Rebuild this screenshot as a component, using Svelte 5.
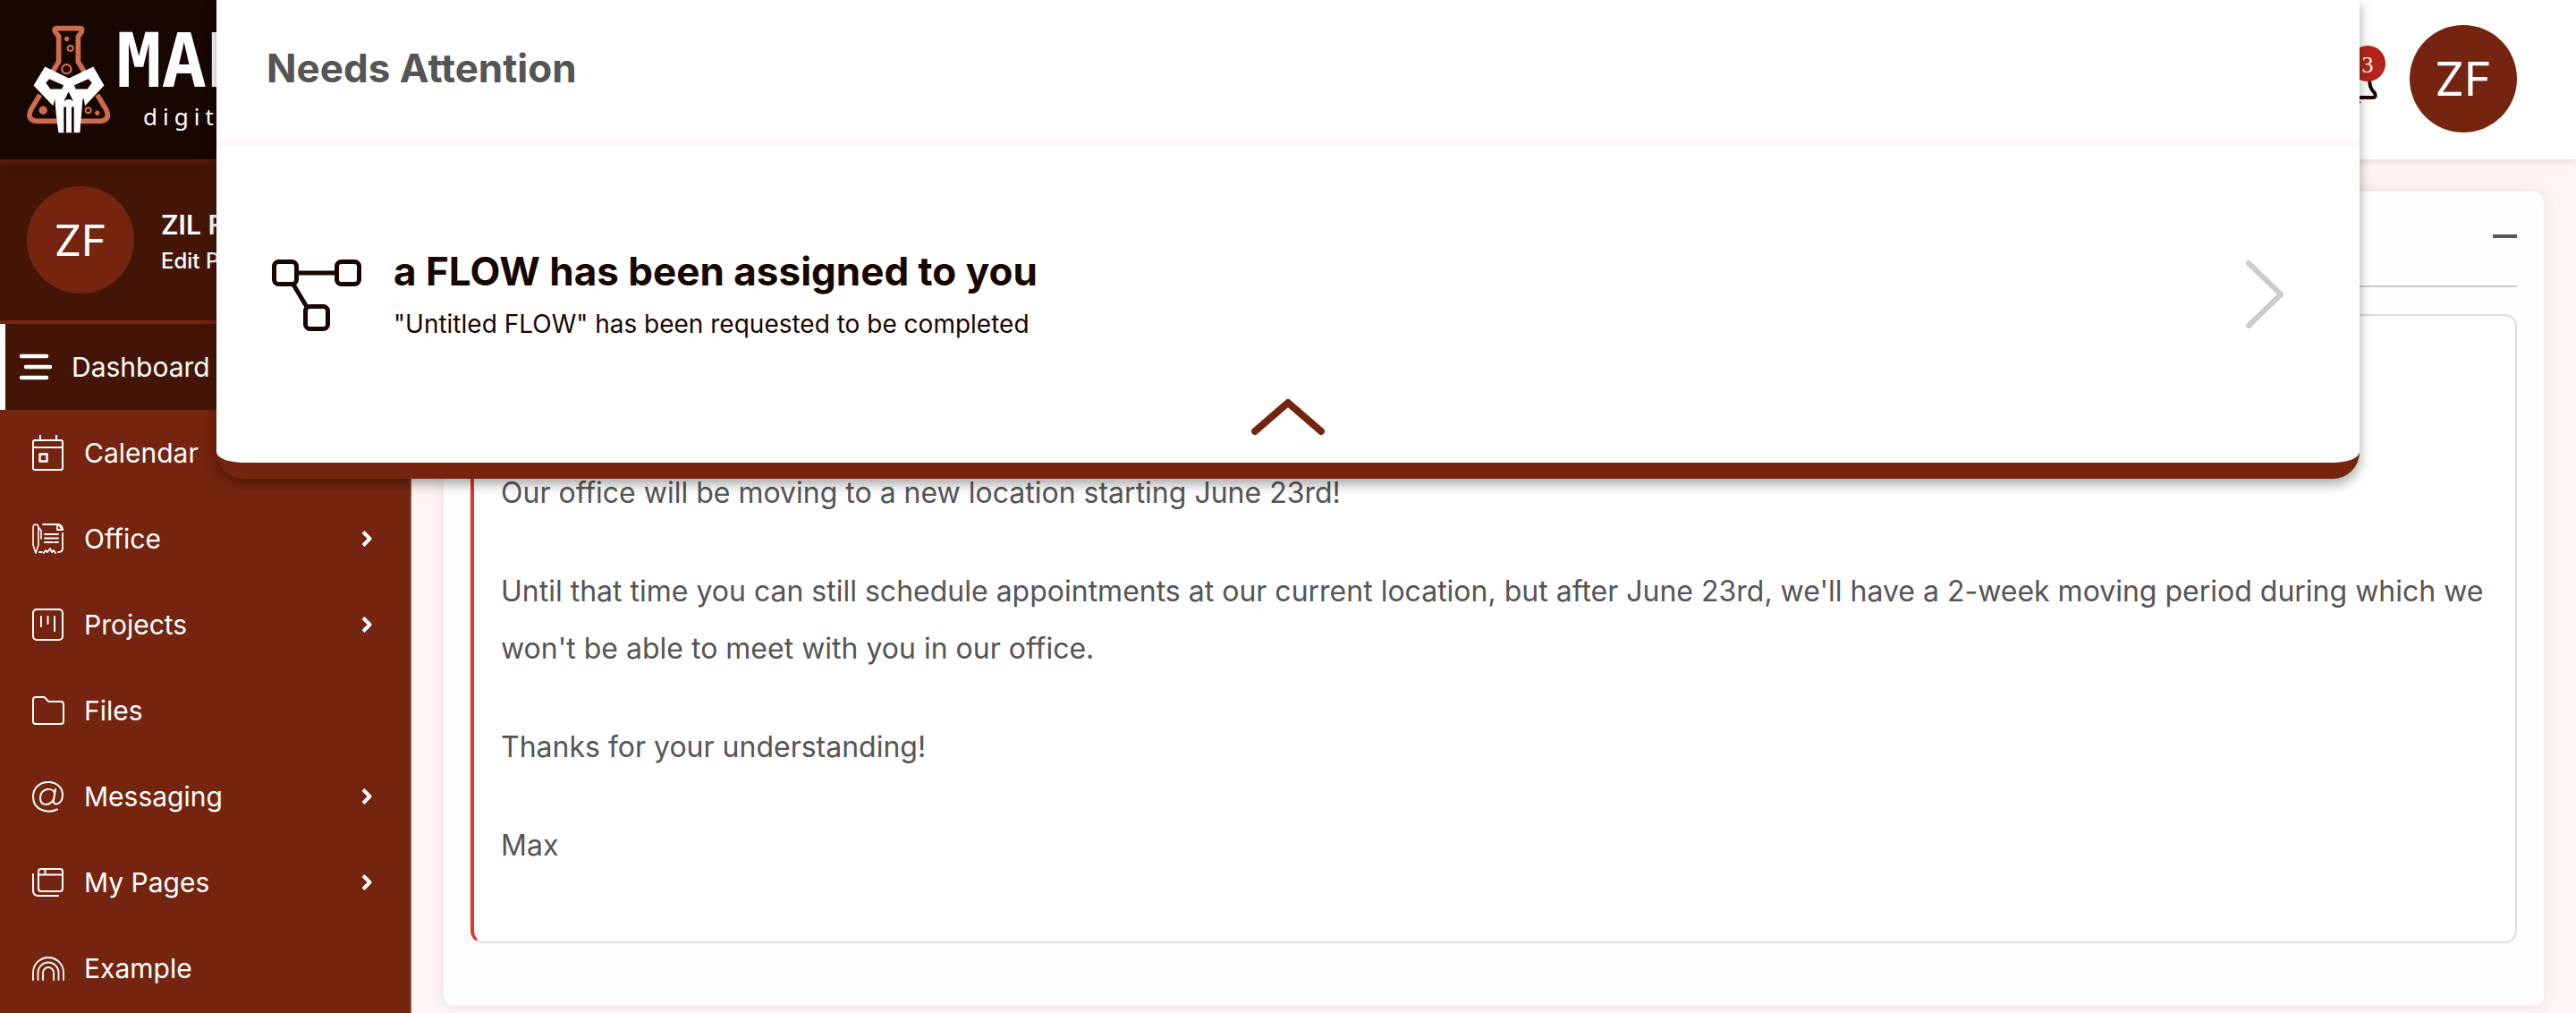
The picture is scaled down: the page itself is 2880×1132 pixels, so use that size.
<script lang="ts">
  interface NavItem {
    label: string;
    icon: string;
    active?: boolean;
    expandable?: boolean;
  }

  const navItems: NavItem[] = [
    { label: 'Dashboard', icon: 'dashboard', active: true },
    { label: 'Calendar', icon: 'calendar' },
    { label: 'Office', icon: 'office', expandable: true },
    { label: 'Projects', icon: 'projects', expandable: true },
    { label: 'Files', icon: 'files' },
    { label: 'Messaging', icon: 'messaging', expandable: true },
    { label: 'My Pages', icon: 'pages', expandable: true },
    { label: 'Example', icon: 'example' },
  ];

  const initials = 'ZF';

  let attentionOpen = $state(true);
  let cardOpen = $state(true);
</script>

<div class="app">
  <aside class="sidebar">
    <a class="logo" href="/" aria-label="Home">
      <svg class="logo-mark" viewBox="90 84 280 362" aria-hidden="true">
        <g fill="none" stroke="#cd6c4c" stroke-width="17" stroke-linejoin="round">
          <path d="M172 246 L196 207 V122 L184 106 Q179 95 190 95 H266 Q278 95 273 106 L261 122 V207 L285 246" />
          <path d="M133 317 L103 367 Q88 400 120 405 H338 Q370 400 355 367 L325 317" />
          <circle cx="222" cy="231" r="15" stroke-width="7" />
          <circle cx="235" cy="162" r="9" stroke-width="6" />
          <circle cx="295" cy="369" r="9" stroke-width="6" />
        </g>
        <g fill="#cd6c4c">
          <circle cx="223" cy="130" r="8" />
          <circle cx="144" cy="369" r="14" />
          <circle cx="325" cy="378" r="8" />
        </g>
        <path
          fill="#fff"
          d="M150 223 L230 262 L312 223 L348 286 L284 354 L280 330 L276 332 L267 444 H195 L187 378 L183 330 L177 354 L112 286 Z"
        />
        <g fill="#180600">
          <path d="M153 277 L165 264 L212 285 L207 298 H168 Z" />
          <path d="M307 277 L295 264 L248 285 L253 298 H292 Z" />
          <path d="M229 307 L213 339 Q229 326 245 339 Z" />
          <path d="M213 358 H221 V444 H213 Z M239 358 H247 V444 H239 Z" />
        </g>
      </svg>
      <span class="logo-text">
        <span class="logo-name">MAD</span>
        <span class="logo-tag">digital</span>
      </span>
    </a>

    <div class="profile">
      <span class="avatar">{initials}</span>
      <div class="profile-text">
        <span class="profile-name">ZIL F</span>
        <a class="profile-edit" href="/profile">Edit Profile</a>
      </div>
    </div>

    <nav>
      {#each navItems as item}
        <a class="nav-item" class:active={item.active} href="/{item.icon}">
          <svg class="nav-icon" viewBox="0 0 36 40" aria-hidden="true">
            {#if item.icon === 'dashboard'}
              <path d="M2 8 H30 M7 20 H34 M2 32 H30" stroke-width="4.5" />
            {:else if item.icon === 'calendar'}
              <rect x="1" y="6" width="33" height="33" rx="2" />
              <path d="M1 14 H34 M9 0 V6 M27 0 V6" />
              <rect x="8.5" y="21.5" width="8" height="8" stroke-width="2.5" />
            {:else if item.icon === 'office'}
              <path d="M1 8 Q1 4 4 4 Q7 4 7 8 V27 L4 36 L1 27 Z M7 7 L10 11 V20" stroke-width="1.6" />
              <path d="M12 4 H29 L34 10 M28 4 V10 H34 V9 Q33 4 28 4 M34 14 V31 Q34 35 29 35" stroke-width="1.8" />
              <path d="M14 15 H29 M14 19.5 H29 M14 24 H23 M25 24 H29" stroke-width="1.8" />
              <path d="M8 35 H11 M13 36 L15 33 L17 35 L20 31 L22 35 L24 33 L26 36" stroke-width="1.8" />
            {:else if item.icon === 'projects'}
              <rect x="1" y="3" width="33" height="34" rx="4" />
              <path d="M10 11 V22 M17.5 11 V19 M25 11 V27" />
            {:else if item.icon === 'files'}
              <path d="M4 5 H13.5 L18.5 10 H32 Q35 10 35 13 V32 Q35 35 32 35 H4 Q1 35 1 32 V8 Q1 5 4 5 Z" />
            {:else if item.icon === 'messaging'}
              <path d="M28 34.5 C19 39 1 37 1 20 C1 10 9 4 18 4 C27 4 34 10 34 18 C34 30 22 31 24 24 L26 12" />
              <path d="M25 16 C22 9 9 11 9 22 C9 31 20 31 24 23" />
            {:else if item.icon === 'pages'}
              <rect x="7" y="5" width="27" height="25" rx="3" />
              <path d="M7 11.5 H34 M14.5 5 V11.5 M1 11 V29 Q1 35 7 35 H29" />
            {:else}
              <path d="M1 33 V25 A17 17 0 0 1 35 25 V33 M6.5 33 V25 A11.5 11.5 0 0 1 29.5 25 V33 M12 33 V25 A6 6 0 0 1 24 25 V33" stroke-width="1.8" />
            {/if}
          </svg>
          <span>{item.label}</span>
          {#if item.expandable}
            <svg class="nav-chevron" viewBox="0 0 14 20" aria-hidden="true">
              <path d="M3 2.5 L10.5 10 L3 17.5" />
            </svg>
          {/if}
        </a>
      {/each}
    </nav>
  </aside>

  <div class="content">
    <header class="topbar">
      <button class="bell" aria-label="Notifications">
        <svg viewBox="0 -4 52 64" aria-hidden="true">
          <path d="M26 5 C14 5 9 14 9 26 C9 37 6 41 3 44 Q1 49 5 49 H47 Q51 49 49 44 C45 40 43 37 43 26 C43 14 38 5 26 5 Z M20 53 Q26 60 32 53" />
        </svg>
        <span class="badge">3</span>
      </button>
      <button class="avatar avatar-top" aria-label="Account">{initials}</button>
    </header>

    <main>
      <section class="card">
        <div class="card-head">
          <button class="collapse" aria-label="Collapse" onclick={() => (cardOpen = !cardOpen)}>
            <span class="collapse-bar"></span>
          </button>
        </div>
        {#if cardOpen}
          <article class="notice">
            <p>Our office will be moving to a new location starting June 23rd!</p>
            <p>
              Until that time you can still schedule appointments at our current location, but after June 23rd, we'll
              have a 2-week moving period during which we won't be able to meet with you in our office.
            </p>
            <p>Thanks for your understanding!</p>
            <p>Max</p>
          </article>
        {/if}
      </section>
    </main>
  </div>

  {#if attentionOpen}
    <div class="attention" role="dialog" aria-labelledby="attention-title">
      <h2 id="attention-title">Needs Attention</h2>
      <div class="attention-body">
        <a class="task" href="/flows">
          <svg class="flow-icon" viewBox="0 0 100 80" aria-hidden="true">
            <rect x="2.5" y="2.5" width="25" height="25" rx="5" />
            <rect x="72.5" y="2.5" width="25" height="25" rx="5" />
            <rect x="37.5" y="52.5" width="25" height="25" rx="5" />
            <path d="M28 15 H72 M24 28 L39 53" />
          </svg>
          <span class="task-text">
            <strong>a FLOW has been assigned to you</strong>
            <span>"Untitled FLOW" has been requested to be completed</span>
          </span>
          <svg class="task-chevron" viewBox="0 0 44 78" aria-hidden="true">
            <path d="M4 3 L40 38 L4 73" />
          </svg>
        </a>
        <button class="dismiss" aria-label="Close" onclick={() => (attentionOpen = false)}>
          <svg viewBox="0 0 82 42" aria-hidden="true">
            <path d="M4 38 L41 6 L78 38" />
          </svg>
        </button>
      </div>
    </div>
  {/if}
</div>

<style>
  :global(body) {
    margin: 0;
    background: #fdf6f4;
  }

  .app {
    position: relative;
    display: flex;
    min-height: 100vh;
    overflow: hidden;
    font-family: Inter, 'Liberation Sans', sans-serif;
    color: #555;
  }

  a {
    color: inherit;
    text-decoration: none;
  }

  button {
    padding: 0;
    border: none;
    background: none;
    font-family: inherit;
    cursor: pointer;
  }

  svg {
    display: block;
    fill: none;
    flex-shrink: 0;
  }

  /* sidebar */
  .sidebar {
    flex: 0 0 460px;
    box-sizing: border-box;
    border-right: 2px solid #8f4a38;
    background: #75250f;
    color: #fff;
  }

  .logo {
    display: flex;
    gap: 6px;
    height: 178px;
    box-sizing: border-box;
    padding: 28px 30px;
    background: #180600;
  }

  .logo-mark {
    width: 94px;
    height: 121px;
  }

  .logo-text {
    display: flex;
    flex-direction: column;
  }

  .logo-name {
    font: bold 84px/80px 'DejaVu Sans Mono', monospace;
  }

  .logo-tag {
    padding-left: 30px;
    font: 26px/44px 'Noto Sans', sans-serif;
    letter-spacing: 6px;
  }

  .profile {
    display: flex;
    align-items: center;
    gap: 30px;
    padding: 30px;
    border-bottom: 4px solid #75250f;
    background: #441506;
    box-shadow: inset 0 8px 8px -6px #5a200e;
  }

  .avatar {
    display: flex;
    align-items: center;
    justify-content: center;
    flex-shrink: 0;
    width: 120px;
    height: 120px;
    border-radius: 50%;
    background: #75250f;
    color: #fff;
    font-size: 48px;
    font-weight: 400;
  }

  .profile-text {
    display: flex;
    flex-direction: column;
    font-weight: 500;
    white-space: nowrap;
  }

  .profile-name {
    font-size: 30px;
    font-weight: 600;
    line-height: 48px;
  }

  .profile-edit {
    font-size: 24px;
    line-height: 34px;
  }

  .nav-item {
    display: flex;
    align-items: center;
    gap: 22px;
    height: 96px;
    padding: 0 41px 0 36px;
    font-size: 30px;
    font-weight: 400;
  }

  .nav-item.active {
    padding-left: 16px;
    border-left: 6px solid #fff;
    background: #441506;
  }

  .nav-icon {
    width: 36px;
    height: 40px;
    stroke: #fff;
    stroke-width: 2;
    stroke-linecap: round;
    stroke-linejoin: round;
  }

  .nav-chevron {
    width: 14px;
    height: 20px;
    margin-left: auto;
    stroke: #fff;
    stroke-width: 4;
    stroke-linejoin: round;
  }

  /* top bar */
  .content {
    flex: 1;
    min-width: 0;
  }

  .topbar {
    position: relative;
    display: flex;
    align-items: center;
    justify-content: flex-end;
    gap: 36px;
    height: 178px;
    box-sizing: border-box;
    padding: 0 66px 2px;
    background: #fff;
    box-shadow: 0 2px 10px rgba(68, 21, 6, 0.12);
  }

  .bell {
    position: relative;
  }

  .bell svg {
    width: 52px;
    height: 64px;
    stroke: #180600;
    stroke-width: 4;
  }

  .badge {
    position: absolute;
    top: -5px;
    right: -9px;
    width: 40px;
    height: 40px;
    border-radius: 50%;
    background: #b3241a;
    color: #fff;
    font: 26px/44px 'Liberation Serif', serif;
    text-align: center;
  }

  .avatar-top {
    font-size: 52px;
  }

  /* notice card */
  main {
    padding: 36px 36px 8px;
  }

  .card {
    padding: 30px 30px 70px;
    border-radius: 12px;
    background: #fefefe;
    box-shadow: 0 0 16px rgba(68, 21, 6, 0.1);
  }

  .card-head {
    display: flex;
    justify-content: flex-end;
    padding-bottom: 35px;
    border-bottom: 2px solid #ccc;
  }

  .collapse {
    display: flex;
    align-items: center;
    height: 40px;
  }

  .collapse-bar {
    width: 27px;
    height: 4px;
    background: #555;
  }

  .notice {
    margin-top: 30px;
    padding: 166px 30px 29px;
    border: 2px solid #ddd;
    border-left: 4px solid #ea3323;
    border-radius: 14px;
    background: #fff;
    font-size: 32px;
    line-height: 64px;
  }

  .notice p {
    margin: 0 0 46px;
  }

  /* attention drawer */
  .attention {
    position: absolute;
    top: 0;
    left: 242px;
    right: 242px;
    border-bottom: 18px solid #75250f;
    border-radius: 0 0 30px 30px;
    background: #fff;
    box-shadow: 0 6px 14px rgba(0, 0, 0, 0.35);
  }

  h2 {
    margin: 0;
    padding: 44px 56px 47px;
    border-bottom: 8px solid #fdf8f7;
    font-size: 44px;
    font-weight: 700;
    line-height: 64px;
  }

  .attention-body {
    padding: 108px 62px 31px;
  }

  .task {
    display: flex;
    align-items: center;
    gap: 36px;
    padding-right: 22px;
    color: #180600;
  }

  .flow-icon {
    width: 100px;
    height: 80px;
    stroke: currentColor;
    stroke-width: 5;
  }

  .task-text {
    display: flex;
    flex-direction: column;
    flex: 1;
    font-size: 28px;
    line-height: 54px;
  }

  .task-text strong {
    font-size: 44px;
    font-weight: 700;
    line-height: 64px;
  }

  .task-chevron {
    width: 44px;
    height: 78px;
    stroke: #ccc;
    stroke-width: 6;
    stroke-linecap: round;
    stroke-linejoin: round;
  }

  .dismiss {
    display: block;
    margin: 55px auto 0;
  }

  .dismiss svg {
    width: 82px;
    height: 42px;
    stroke: #75250f;
    stroke-width: 8;
    stroke-linecap: round;
    stroke-linejoin: round;
  }
</style>
